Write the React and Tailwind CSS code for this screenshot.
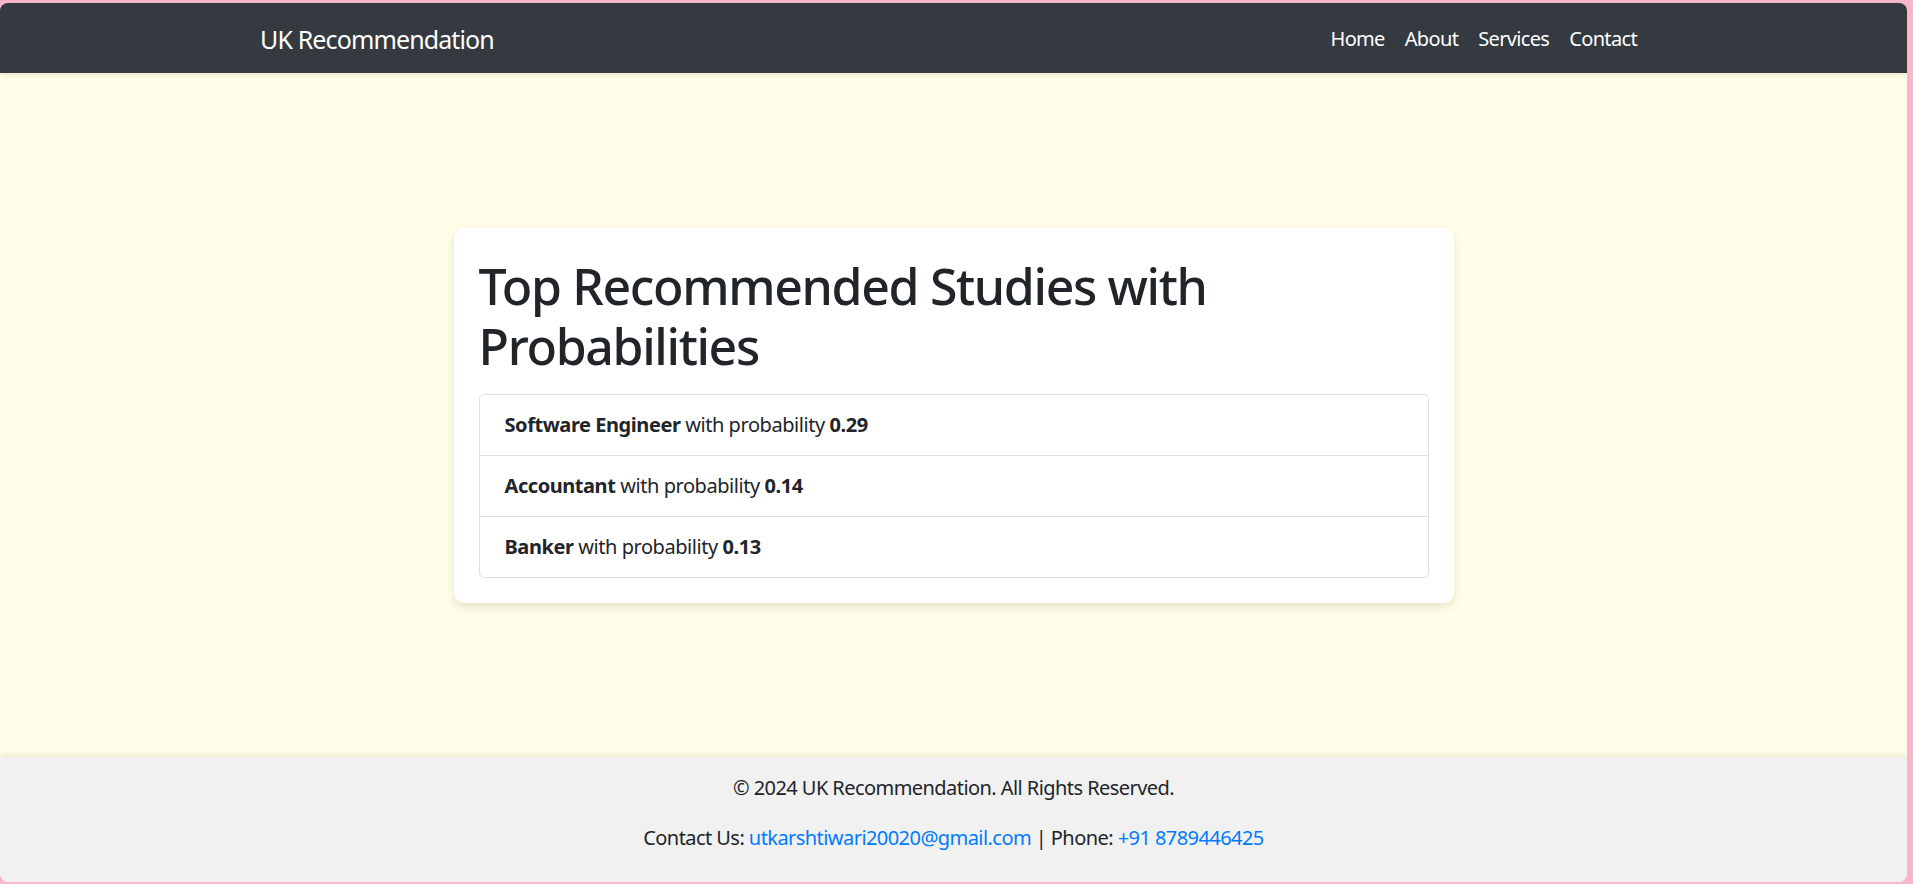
import React from 'react';

const results = [
  { id: 1, name: 'Software Engineer', probability: '0.29' },
  { id: 2, name: 'Accountant', probability: '0.14' },
  { id: 3, name: 'Banker', probability: '0.13' }
];

const links = ['Home', 'About', 'Services', 'Contact'];

const App = () => {
  return (
    <div
      className="h-[884px] bg-[#f7b6cc] pt-[3px] pr-[6px] pb-[2px] tracking-[-0.026em] text-[#212529]"
      style={{ fontFamily: '"Noto Sans", "Open Sans", sans-serif' }}
    >
      <div className="flex h-full flex-col overflow-hidden rounded-[8px]">
        <nav className="relative z-10 h-[70px] shrink-0 bg-[#343a40] shadow-[0_2px_5px_rgba(0,0,0,0.1)]">
          <div className="mx-auto flex h-full w-[1425px] items-center justify-between px-[19px] pt-[2px]">
            <a href="#" className="text-[25px] leading-[38px] tracking-[-0.035em] text-white">
              UK Recommendation
            </a>
            <ul className="flex">
              {links.map((link) => (
                <li key={link}>
                  <a href="#" className="block px-[10px] text-[20px] leading-[30px] tracking-[-0.033em] text-white">
                    {link}
                  </a>
                </li>
              ))}
            </ul>
          </div>
        </nav>

        <main className="flex flex-1 items-center justify-center bg-[#fffde7]">
          <div className="w-[1000px] rounded-[10px] bg-white p-[25px] shadow-[0_4px_10px_rgba(0,0,0,0.1)]">
            <h1 className="mb-[18px] pt-[3px] text-[50px] font-medium leading-[60px] tracking-[-0.027em]">
              Top Recommended Studies with Probabilities
            </h1>
            <ul className="rounded-[5px] border border-[#dfdfdf]">
              {results.map((item, i) => (
                <li
                  key={item.id}
                  className={`px-[25px] py-[15px] text-[20px] leading-[30px] tracking-[-0.022em] ${i > 0 ? 'border-t border-[#dfdfdf]' : ''}`}
                >
                  <strong className="font-bold">{item.name}</strong> with probability{' '}
                  <strong className="font-bold">{item.probability}</strong>
                </li>
              ))}
            </ul>
          </div>
        </main>

        <footer className="relative z-10 h-[125px] shrink-0 bg-[#f1f1f1] pt-[16px] text-center text-[20px] leading-[30px] tracking-[-0.028em] shadow-[0_-2px_6px_rgba(0,0,0,0.08)]">
          <p className="mb-[20px]">&copy; 2024 UK Recommendation. All Rights Reserved.</p>
          <p>
            Contact Us:{' '}
            <a href="mailto:utkarshtiwari20020@gmail.com" className="text-[#007bff]">
              utkarshtiwari20020@gmail.com
            </a>{' '}
            | Phone:{' '}
            <a href="tel:+918789446425" className="text-[#007bff]">
              +91 8789446425
            </a>
          </p>
        </footer>
      </div>
    </div>
  );
};

export default App;
